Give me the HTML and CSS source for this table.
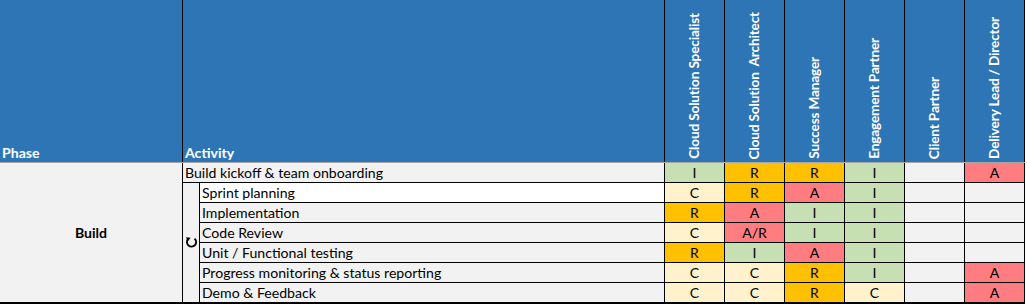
FILE: index.html
```html
<!DOCTYPE html>
<html lang="en">
<head>
<meta charset="utf-8">
<link rel="stylesheet" href="styles.css">
<title>RACI - Build</title>
</head>
<body>
<div class="sheet">
  <div class="grid head">
    <div class="hcell hphase">Phase</div>
    <div class="hcell hact">Activity</div>
    <div class="hcell hrole"><span class="vt">Cloud Solution Specialist</span></div>
    <div class="hcell hrole"><span class="vt">Cloud Solution&nbsp; Architect</span></div>
    <div class="hcell hrole"><span class="vt">Success Manager</span></div>
    <div class="hcell hrole"><span class="vt">Engagement Partner</span></div>
    <div class="hcell hrole"><span class="vt">Client Partner</span></div>
    <div class="hcell hrole"><span class="vt">Delivery Lead / Director</span></div>
  </div>
  <div class="grid body">
    <div class="phase">Build</div>
    <div class="loop">
      <svg width="13" height="13" viewBox="0 0 13 13" aria-hidden="true">
        <path d="M9.6 2.6 A4.6 4.6 0 1 1 3.2 2.9" fill="none" stroke="#000" stroke-width="1.9"/>
        <path d="M1.0 1.2 L5.6 1.8 L2.7 5.4 Z" fill="#000"/>
      </svg>
    </div>

    <div class="act wide">Build kickoff &amp; team onboarding</div>
    <div class="c i">I</div><div class="c r">R</div><div class="c r">R</div><div class="c i">I</div><div class="c e"></div><div class="c a">A</div>

    <div class="act white">Sprint planning</div>
    <div class="c k">C</div><div class="c r">R</div><div class="c a">A</div><div class="c i">I</div><div class="c e"></div><div class="c e"></div>

    <div class="act">Implementation</div>
    <div class="c r">R</div><div class="c a">A</div><div class="c i">I</div><div class="c i">I</div><div class="c e"></div><div class="c e"></div>

    <div class="act">Code Review</div>
    <div class="c k">C</div><div class="c a">A/R</div><div class="c i">I</div><div class="c i">I</div><div class="c e"></div><div class="c e"></div>

    <div class="act">Unit / Functional testing</div>
    <div class="c r">R</div><div class="c i">I</div><div class="c a">A</div><div class="c i">I</div><div class="c e"></div><div class="c e"></div>

    <div class="act">Progress monitoring &amp; status reporting</div>
    <div class="c k">C</div><div class="c k">C</div><div class="c r">R</div><div class="c i">I</div><div class="c e"></div><div class="c a">A</div>

    <div class="act">Demo &amp; Feedback</div>
    <div class="c k">C</div><div class="c k">C</div><div class="c r">R</div><div class="c k">C</div><div class="c e"></div><div class="c a">A</div>
  </div>
</div>
</body>
</html>
```
FILE: styles.css
```css
html, body {
  margin: 0;
  padding: 0;
  background: #ffffff;
}
body {
  font-family: Lato, "Liberation Sans", sans-serif;
  font-size: 14.1px;
  color: #000;
}
.sheet {
  width: 1025px;
}
.grid {
  display: grid;
  grid-template-columns: 182px 16px 464px repeat(6, 59px);
  column-gap: 1px;
  background: #000;
  padding-right: 1px;
}
.head {
  grid-template-rows: 162px;
  border-bottom: 1px solid #a6a6a6;
}
.hcell {
  background: #2e75b6;
  color: #fff;
  font-weight: 700;
  line-height: 19px;
  display: flex;
  align-items: flex-end;
  padding-left: 2px;
  overflow: hidden;
}
.hact {
  grid-column: 2 / 4;
}
.hrole {
  padding: 0 0 3px 0;
  justify-content: center;
}
.vt {
  writing-mode: vertical-rl;
  transform: rotate(180deg);
  white-space: nowrap;
  line-height: 19px;
  font-size: 13.6px;
  letter-spacing: -0.15px;
}
.body {
  grid-template-rows: repeat(7, 19px);
  row-gap: 1px;
  padding-bottom: 2px;
}
.phase {
  grid-column: 1;
  grid-row: 1 / 8;
  background: #f2f2f2;
  font-weight: 700;
  display: flex;
  align-items: center;
  justify-content: center;
}
.loop {
  grid-column: 2;
  grid-row: 2 / 8;
  background: #f2f2f2;
  display: flex;
  align-items: center;
  justify-content: center;
}
.loop svg {
  display: block;
  margin-left: 1px;
}
.act {
  grid-column: 3;
  background: #f2f2f2;
  line-height: 19px;
  padding-left: 2px;
  white-space: nowrap;
}
.act.wide {
  grid-column: 2 / 4;
}
.act.white {
  background: #ffffff;
}
.c {
  line-height: 19px;
  text-align: center;
}
.i { background: #c6e0b4; }
.r { background: #ffc000; }
.a { background: #ff7c80; }
.k { background: #fff2cc; }
.e { background: #f2f2f2; }
```
